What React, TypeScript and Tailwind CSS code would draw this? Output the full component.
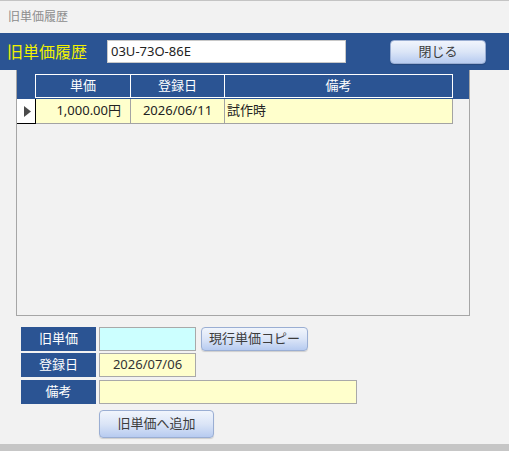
import React from 'react';

const jp = { fontFamily: '"Noto Sans", "Noto Sans CJK JP", sans-serif' };

const btn =
  'flex items-center justify-center rounded-[4px] border border-[#9aaed3] bg-gradient-to-b from-[#f1f5fc] via-[#dbe5f7] to-[#b7cbf0] text-[13px] text-[#3c3c3c] shadow-[0_1px_1px_rgba(0,0,0,0.15)]';

const FieldLabel: React.FC<{ text: string }> = ({ text }) => (
  <div className="flex h-[24px] w-[75px] items-center justify-center bg-[#2b5493] text-[13px] text-white">
    {text}
  </div>
);

export default function App() {
  return (
    <div className="flex h-[451px] w-[509px] flex-col overflow-hidden bg-[#f2f2f2]" style={jp}>
      {/* form caption */}
      <div className="h-[33px] border-t border-[#c4c4c4] pl-[8px] pt-[8px] text-[12px] leading-[16px] text-[#8d8d8d]">
        旧単価履歴
      </div>

      {/* header band */}
      <div className="flex h-[37px] items-center bg-[#2b5493]">
        <div className="w-[107px] pl-[7px] text-[16px] leading-[20px] text-[#f2f200]">旧単価履歴</div>
        <div className="flex h-[23px] w-[239px] items-center border border-[#c8c8c8] bg-white pl-[3px] text-[13px] text-[#222]">
          03U-73O-86E
        </div>
        <button className={`${btn} ml-[44px] h-[24px] w-[96px]`}>閉じる</button>
      </div>

      {/* datasheet subform */}
      <div className="ml-[16px] flex h-[246px] w-[454px] flex-col border-x border-b border-[#a6a6a6]">
        <div className="flex h-[29px] bg-[#2b5493] pl-[18px] pt-[4px]">
          <div className="flex h-[24px] text-[13px] text-white">
            <div className="flex w-[96px] items-center justify-center border border-white">単価</div>
            <div className="flex w-[94px] items-center justify-center border-y border-r border-white">登録日</div>
            <div className="flex w-[228px] items-center justify-center border-y border-r border-white">備考</div>
          </div>
        </div>
        <div className="flex h-[25px] text-[13px] text-[#222]">
          <div className="flex w-[19px] items-center border-b border-r border-b-black border-r-black bg-white pl-[7px]">
            <svg width="7" height="11" viewBox="0 0 7 11">
              <path d="M0 0 L7 5.5 L0 11 Z" fill="#4a4a4a" />
            </svg>
          </div>
          <div className="flex w-[95px] items-center justify-end border-b border-r border-[#a3a3a3] bg-[#ffffcc] pr-[9px]">
            1,000.00円
          </div>
          <div className="flex w-[94px] items-center justify-center border-b border-r border-[#a3a3a3] bg-[#ffffcc]">
            2026/06/11
          </div>
          <div className="flex w-[228px] items-center border-b border-r border-[#a3a3a3] bg-[#ffffcc] pl-[2px]">
            試作時
          </div>
        </div>
      </div>

      {/* entry fields */}
      <div className="ml-[21px] mt-[11px] flex flex-col">
        <div className="flex items-center">
          <FieldLabel text="旧単価" />
          <div className="ml-[3px] h-[24px] w-[97px] border border-[#a9a9a9] bg-[#ccffff]" />
          <button className={`${btn} ml-[5px] h-[24px] w-[107px]`}>現行単価コピー</button>
        </div>
        <div className="mt-[2px] flex items-center">
          <FieldLabel text="登録日" />
          <div className="ml-[3px] flex h-[24px] w-[97px] items-center justify-center border border-[#a9a9a9] bg-[#ffffcc] text-[13px] text-[#333]">
            2026/07/06
          </div>
        </div>
        <div className="mt-[3px] flex items-center">
          <FieldLabel text="備考" />
          <div className="ml-[3px] h-[24px] w-[258px] border border-[#a9a9a9] bg-[#ffffcc]" />
        </div>
        <button className={`${btn} ml-[78px] mt-[6px] h-[28px] w-[115px]`}>旧単価へ追加</button>
      </div>

      <div className="flex-1" />
      <div className="h-[7px] bg-[#c6c6c6]" />
    </div>
  );
}
